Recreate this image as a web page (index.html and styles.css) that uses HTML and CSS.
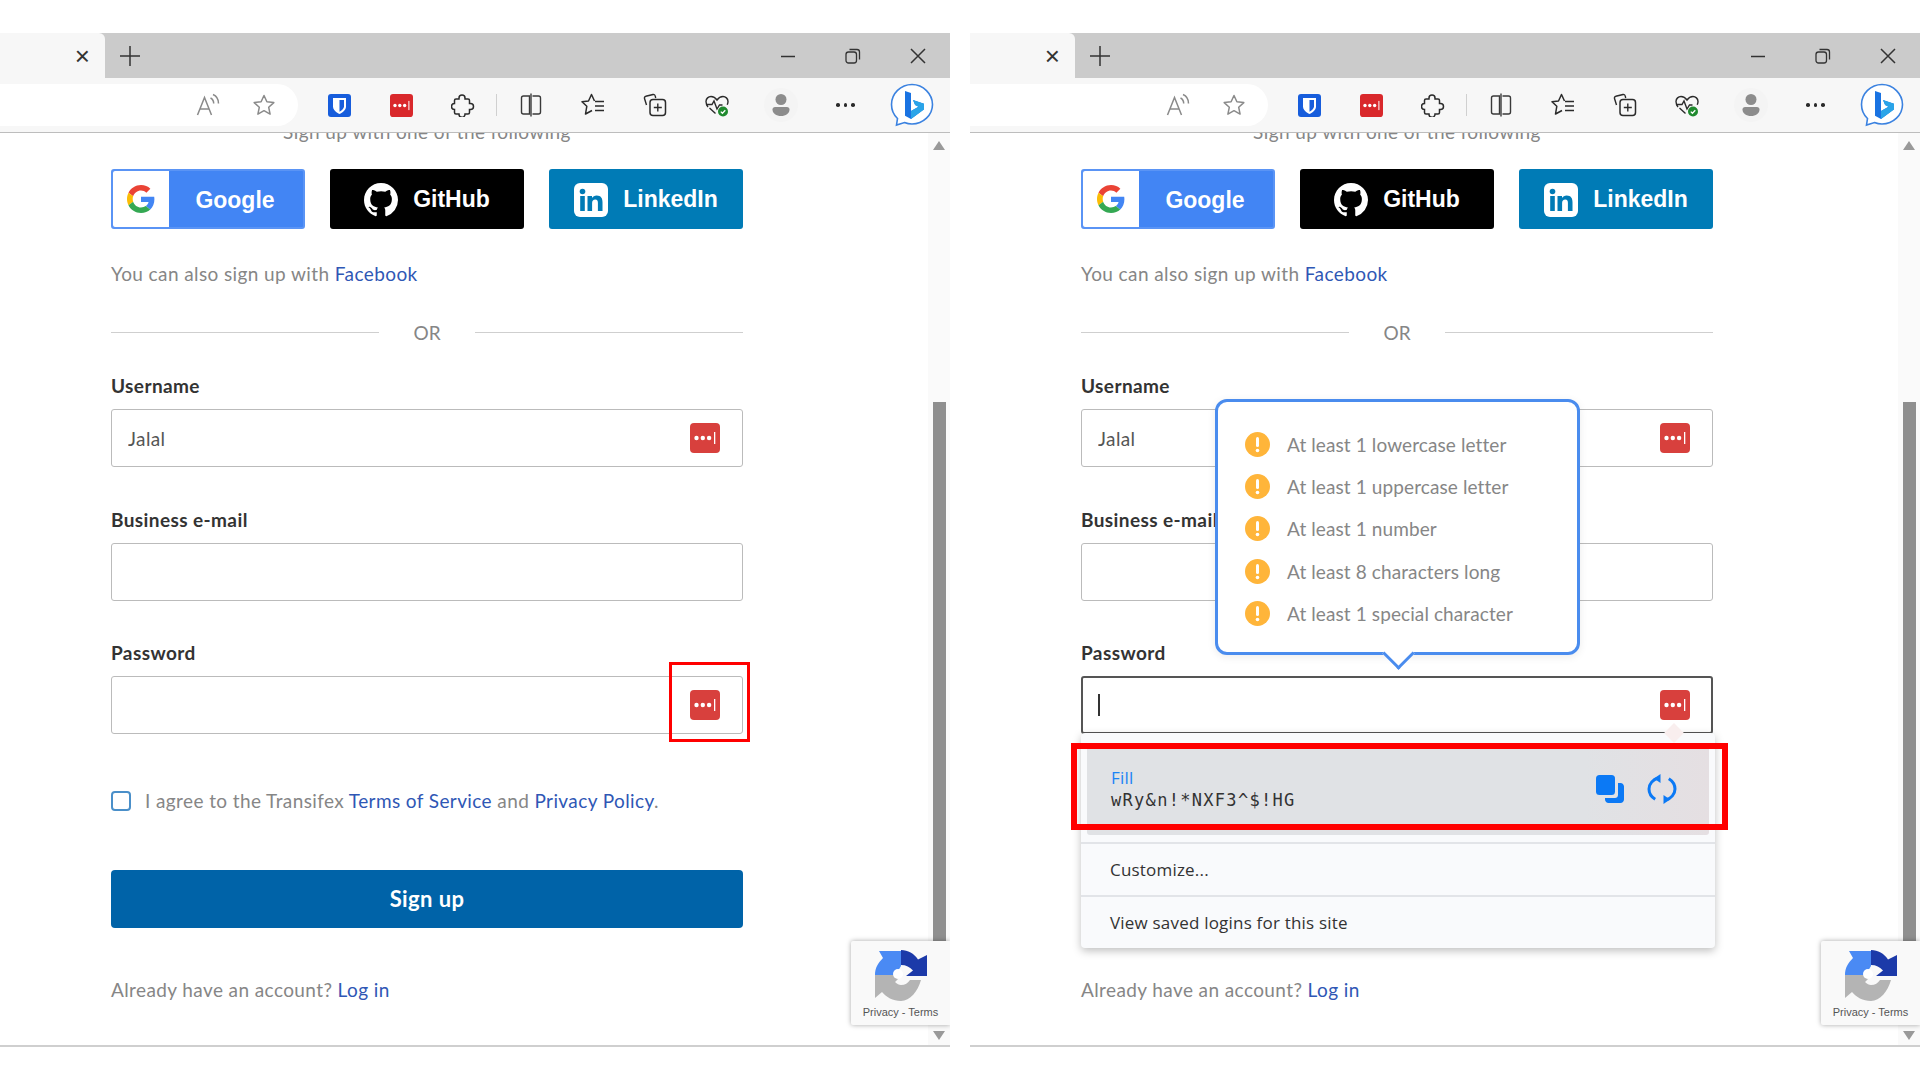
FILE: index.html
```html
<!DOCTYPE html>
<html lang="en">
<head>
    <meta charset="UTF-8">
    <title>Sign up</title>
    <link rel="stylesheet" href="styles.css">
</head>
<body>
    <!-- Shared icons -->
    <svg class="sprite" xmlns="http://www.w3.org/2000/svg">
        <symbol id="i-read" viewBox="0 0 24 24"><path d="M1.500 22 8.500 4.500 15.500 22M4 16h9" fill="none" stroke="#8a8a8a" stroke-width="1.500"/><path d="M14.500 5c2 1 3.200 3 3.200 5.500M17 1.500c3.500 1.500 5.500 5 5.500 9" fill="none" stroke="#8a8a8a" stroke-width="1.500"/></symbol>
        <symbol id="i-star" viewBox="0 0 24 24"><path d="M12 2.500l2.900 6.300 6.900.8-5.100 4.700 1.400 6.800-6.100-3.400-6.100 3.400 1.400-6.800-5.100-4.700 6.900-.8z" fill="none" stroke="#8a8a8a" stroke-width="1.500" stroke-linejoin="round"/></symbol>
        <symbol id="i-bitwarden" viewBox="0 0 23 23"><rect width="23" height="23" rx="3" fill="#175ddc"/><path d="M5 4h13v8.500c0 3.500-3.500 6-6.500 7.500C8.500 18.500 5 16 5 12.500z" fill="#fff"/><path d="M11.500 6H16v6.500c0 2.200-2.500 4-4.500 5.200z" fill="#175ddc"/></symbol>
        <symbol id="i-lastpass" viewBox="0 0 30 30"><rect width="30" height="30" rx="4" fill="currentColor"/><circle cx="6.500" cy="15" r="2.200" fill="#fff"/><circle cx="12.800" cy="15" r="2.200" fill="#fff"/><circle cx="19.100" cy="15" r="2.200" fill="#fff"/><rect x="24" y="9" width="1.300" height="12" fill="#fff"/></symbol>
        <symbol id="i-puzzle" viewBox="0 0 24 24"><path d="M8 6V5a3 3 0 0 1 6 0v1h3a1.500 1.500 0 0 1 1.500 1.500v3h1a3 3 0 0 1 0 6h-1v3A1.500 1.500 0 0 1 17 21h-3v.3a3 3 0 0 1-6 0V21H5a1.500 1.500 0 0 1-1.500-1.500v-3a3 3 0 0 1 0-6v-3A1.500 1.500 0 0 1 5 6z" fill="none" stroke="#2b2b2b" stroke-width="1.500"/></symbol>
        <symbol id="i-split" viewBox="0 0 24 24"><path d="M10.500 3H4.500c-1.100 0-2 .9-2 2v14c0 1.100.9 2 2 2h6zM13.500 3h6c1.100 0 2 .9 2 2v14c0 1.100-.9 2-2 2h-6" fill="none" stroke="#3a3a3a" stroke-width="1.400"/><path d="M12 .5v23" stroke="#3a3a3a" stroke-width="1.400"/></symbol>
        <symbol id="i-favs" viewBox="0 0 24 24"><path d="M13.500 8 10.500 1.500 7.500 8 1 8.800l4.800 4.500L4.500 21l6.500-3.500" fill="none" stroke="#2b2b2b" stroke-width="1.500" stroke-linejoin="round"/><path d="M14 8.500h9M14 13h9M14 17.500h9" stroke="#2b2b2b" stroke-width="1.300"/></symbol>
        <symbol id="i-collect" viewBox="0 0 24 24"><path d="M3.500 12 1.500 5.500c-.3-1 .3-2 1.300-2.200L10 1.500c1-.2 2 .4 2.200 1.400l.5 2.100" fill="none" stroke="#2b2b2b" stroke-width="1.400"/><rect x="7" y="6.500" width="15.500" height="16" rx="3" fill="none" stroke="#2b2b2b" stroke-width="1.500"/><path d="M14.800 10.500v8M10.800 14.500h8" stroke="#2b2b2b" stroke-width="1.400"/></symbol>
        <symbol id="i-health" viewBox="0 0 24 24"><path d="M3 14C1.500 12 1 10.500 1 8.500 1 5.500 3.500 3.500 6 3.500c2.500 0 4.500 1.300 6 3.500 1.500-2.200 3.500-3.500 6-3.500 2.500 0 5 2 5 5 0 1.300-.3 2.300-.8 3.300" fill="none" stroke="#2b2b2b" stroke-width="1.400"/><path d="M1 11.500h6l2-3.500 3 8 2.500-4h3M4.500 15l6 5.500" fill="none" stroke="#2b2b2b" stroke-width="1.400"/><circle cx="18" cy="18.500" r="5" fill="#1f8a2e"/><path d="M15.800 18.600l1.600 1.600 2.900-3" fill="none" stroke="#fff" stroke-width="1.300"/></symbol>
        <symbol id="i-profile" viewBox="0 0 34 34"><circle cx="17" cy="17" r="17" fill="#f4f4f4"/><circle cx="17" cy="11.500" r="5.500" fill="#8c8c8c"/><path d="M8.500 21.500c0-1.500 1-2.500 2.500-2.500h12c1.500 0 2.500 1 2.500 2.500 0 4-3.800 6.500-8.500 6.500s-8.500-2.500-8.500-6.500z" fill="#8c8c8c"/></symbol>
        <symbol id="i-bing" viewBox="0 0 44 44">
            <path d="M22 1.500C10.700 1.500 1.500 10.500 1.500 21.500c0 5.500 2.300 10.500 6 14l-1 6.500 8-2.500c2.400 1 5 1.500 7.500 1.500 11.300 0 20.500-9 20.500-19.500S33.300 1.500 22 1.500z" fill="#fff" stroke="#3b82e0" stroke-width="1.600"/>
            <path d="M15 8l6 2v18l7.500-4.300-3.400-1.600-2.100-5.200 11 3.800v5.600L21 36l-6-3.300z" fill="#1a73e2"/>
            <path d="M21 28l7.500-4.300-3.400-1.600L23 17l11 3.800v5.600L21 36z" fill="#2aa4e8"/>
        </symbol>
        <symbol id="i-google" viewBox="0 0 48 48">
            <path fill="#ea4335" d="M24 9.500c3.540 0 6.710 1.220 9.210 3.600l6.850-6.850C35.900 2.380 30.470 0 24 0 14.620 0 6.510 5.380 2.560 13.220l7.980 6.190C12.430 13.720 17.740 9.500 24 9.500z"/>
            <path fill="#4285f4" d="M46.980 24.550c0-1.570-.15-3.090-.38-4.550H24v9.020h12.940c-.58 2.960-2.260 5.480-4.780 7.180l7.730 6c4.510-4.180 7.090-10.360 7.090-17.650z"/>
            <path fill="#fbbc05" d="M10.530 28.590c-.48-1.450-.76-2.990-.76-4.590s.27-3.140.76-4.590l-7.980-6.190C.92 16.460 0 20.120 0 24c0 3.880.92 7.540 2.560 10.780l7.970-6.190z"/>
            <path fill="#34a853" d="M24 48c6.480 0 11.930-2.130 15.890-5.810l-7.730-6c-2.150 1.450-4.920 2.300-8.160 2.300-6.260 0-11.570-4.220-13.470-9.910l-7.980 6.190C6.510 42.620 14.620 48 24 48z"/>
        </symbol>
        <symbol id="i-github" viewBox="0 0 16 16"><path fill="#fff" d="M8 0C3.580 0 0 3.580 0 8c0 3.540 2.290 6.530 5.470 7.590.4.070.55-.17.55-.38 0-.19-.01-.82-.01-1.490-2.010.37-2.530-.49-2.690-.94-.09-.23-.48-.94-.82-1.130-.28-.15-.68-.52-.01-.53.630-.01 1.080.58 1.230.82.720 1.210 1.870.87 2.330.66.070-.52.280-.87.510-1.070-1.780-.2-3.640-.89-3.640-3.950 0-.87.310-1.590.820-2.150-.08-.2-.36-1.020.08-2.120 0 0 .67-.21 2.200.82.640-.18 1.320-.27 2-.27.680 0 1.360.09 2 .27 1.530-1.040 2.200-.82 2.200-.82.440 1.100.160 1.920.080 2.120.510.560.820 1.270.820 2.150 0 3.070-1.870 3.750-3.650 3.950.290.250.540.730.540 1.480 0 1.070-.01 1.930-.01 2.200 0 .210.150.460.550.380A8.013 8.013 0 0 0 16 8c0-4.420-3.580-8-8-8z"/></symbol>
        <symbol id="i-linkedin" viewBox="0 0 34 34"><rect width="34" height="34" rx="6" fill="#fff"/><circle cx="8.500" cy="8.500" r="2.800" fill="#007bb6"/><rect x="6.200" y="13" width="4.600" height="15" fill="#007bb6"/><path d="M13.500 13H18v2.100c.9-1.500 2.600-2.500 4.700-2.500 4.300 0 5.800 2.800 5.800 6.700V28h-4.600v-7.900c0-2-.6-3.500-2.600-3.500-2.100 0-3.200 1.500-3.200 3.500V28h-4.600z" fill="#007bb6"/></symbol>
        <symbol id="i-captcha" viewBox="0 0 52 52">
            <path fill="#b4b4b4" d="M0 25h27l-7 7c2 2 4 3 6 3 4 0 7-2 9-5h11c-3 11-11 21-20 21-8 0-15-4-19-9l-7 6z"/>
            <path fill="#4a8af4" d="M0 25c0-7 3-12 8-17L4 1h22v15l-3 5-3 4H0z"/>
            <path fill="#1c3aa9" d="M26 0c7 0 13 3.500 17 9.500L52 5v21H31l7-5.500c-3-3.500-7-5.500-12-5.500z"/>
            <circle cx="23" cy="24" r="5" fill="#fff"/>
        </symbol>
        <symbol id="i-warn" viewBox="0 0 25 25"><circle cx="12.500" cy="12.500" r="12.500" fill="#ffb53a"/><rect x="11" y="5" width="3" height="10" rx="1.500" fill="#fff"/><circle cx="12.500" cy="18.500" r="1.800" fill="#fff"/></symbol>
    </svg>

    <div class="screens">
        <!-- Left window: field with the LastPass icon -->
        <div class="browser">
            <div class="tabbar">
                <div class="tab"><span class="tab-close">&times;</span></div>
                <svg class="new-tab" width="20" height="20" viewBox="0 0 20 20"><path d="M10 0v20M0 10h20" stroke="#333" stroke-width="1.500"/></svg>
                <div class="win-controls">
                    <div class="win-btn"><svg width="16" height="16" viewBox="0 0 16 16"><path d="M1 8.500h14" stroke="#333" stroke-width="1.500"/></svg></div>
                    <div class="win-btn"><svg width="16" height="16" viewBox="0 0 16 16"><rect x="1" y="4" width="10.500" height="11" rx="2.500" fill="none" stroke="#333" stroke-width="1.300"/><path d="M4.500 1.500H12c1.500 0 2.500 1 2.500 2.500v7.500" fill="none" stroke="#333" stroke-width="1.300"/></svg></div>
                    <div class="win-btn"><svg width="16" height="16" viewBox="0 0 16 16"><path d="M1 1l14 14M15 1L1 15" stroke="#333" stroke-width="1.500"/></svg></div>
                </div>
            </div>
            <div class="toolbar">
                <div class="address">
                    <div class="cell-address"><svg class="ico-24"><use href="#i-read"/></svg></div>
                    <div class="cell-address"><svg class="ico-24"><use href="#i-star"/></svg></div>
                </div>
                <div class="tool"><svg class="ico-23"><use href="#i-bitwarden"/></svg></div>
                <div class="tool"><svg class="ico-23 lp-tool"><use href="#i-lastpass"/></svg></div>
                <div class="tool"><svg class="ico-24"><use href="#i-puzzle"/></svg></div>
                <div class="tool-sep"></div>
                <div class="tool"><svg class="ico-24"><use href="#i-split"/></svg></div>
                <div class="tool"><svg class="ico-24"><use href="#i-favs"/></svg></div>
                <div class="tool"><svg class="ico-24"><use href="#i-collect"/></svg></div>
                <div class="tool"><svg class="ico-24"><use href="#i-health"/></svg></div>
                <div class="tool tool-wide"><svg class="ico-34"><use href="#i-profile"/></svg></div>
                <div class="tool tool-wide"><div class="dots"><i></i><i></i><i></i></div></div>
                <div class="tool tool-bing"><svg class="ico-44"><use href="#i-bing"/></svg></div>
            </div>
            <div class="page">
                <div class="page-body">
                    <div class="form">
                        <p class="signup-with">Sign up with one of the following</p>
                        <div class="social">
                            <a class="social-btn btn-google"><span class="g-box"><svg class="ico-26"><use href="#i-google"/></svg></span><span class="g-label">Google</span></a>
                            <a class="social-btn btn-github"><svg class="ico-34"><use href="#i-github"/></svg>GitHub</a>
                            <a class="social-btn btn-linkedin"><svg class="ico-34"><use href="#i-linkedin"/></svg>LinkedIn</a>
                        </div>
                        <p class="text also">You can also sign up with <a class="link">Facebook</a></p>
                        <div class="or"><span>OR</span></div>
                        <div class="field field-first">
                            <label class="field-label">Username</label>
                            <div class="input-wrap"><input class="input" type="text" value="Jalal"><svg class="lp-icon"><use href="#i-lastpass"/></svg></div>
                        </div>
                        <div class="field">
                            <label class="field-label">Business e-mail</label>
                            <div class="input-wrap"><input class="input" type="text"></div>
                        </div>
                        <div class="field field-last">
                            <label class="field-label">Password</label>
                            <div class="input-wrap"><input class="input" type="text"><svg class="lp-icon"><use href="#i-lastpass"/></svg></div>
                        </div>
                        <div class="agree"><span class="checkbox"></span><p class="text">I agree to the Transifex <a class="link">Terms of Service</a> and <a class="link">Privacy Policy</a>.</p></div>
                        <button class="submit">Sign up</button>
                        <p class="text already">Already have an account? <a class="link">Log in</a></p>
                    </div>
                </div>
                <div class="scrollbar"><div class="arrow-up"></div><div class="thumb"></div><div class="arrow-down"></div></div>
                <div class="captcha"><svg class="ico-52"><use href="#i-captcha"/></svg><span>Privacy - Terms</span></div>
                <div class="mark mark-icon"></div>
            </div>
        </div>

        <!-- Right window: password generator open -->
        <div class="browser">
            <div class="tabbar">
                <div class="tab"><span class="tab-close">&times;</span></div>
                <svg class="new-tab" width="20" height="20" viewBox="0 0 20 20"><path d="M10 0v20M0 10h20" stroke="#333" stroke-width="1.500"/></svg>
                <div class="win-controls">
                    <div class="win-btn"><svg width="16" height="16" viewBox="0 0 16 16"><path d="M1 8.500h14" stroke="#333" stroke-width="1.500"/></svg></div>
                    <div class="win-btn"><svg width="16" height="16" viewBox="0 0 16 16"><rect x="1" y="4" width="10.500" height="11" rx="2.500" fill="none" stroke="#333" stroke-width="1.300"/><path d="M4.500 1.500H12c1.500 0 2.500 1 2.500 2.500v7.500" fill="none" stroke="#333" stroke-width="1.300"/></svg></div>
                    <div class="win-btn"><svg width="16" height="16" viewBox="0 0 16 16"><path d="M1 1l14 14M15 1L1 15" stroke="#333" stroke-width="1.500"/></svg></div>
                </div>
            </div>
            <div class="toolbar">
                <div class="address">
                    <div class="cell-address"><svg class="ico-24"><use href="#i-read"/></svg></div>
                    <div class="cell-address"><svg class="ico-24"><use href="#i-star"/></svg></div>
                </div>
                <div class="tool"><svg class="ico-23"><use href="#i-bitwarden"/></svg></div>
                <div class="tool"><svg class="ico-23 lp-tool"><use href="#i-lastpass"/></svg></div>
                <div class="tool"><svg class="ico-24"><use href="#i-puzzle"/></svg></div>
                <div class="tool-sep"></div>
                <div class="tool"><svg class="ico-24"><use href="#i-split"/></svg></div>
                <div class="tool"><svg class="ico-24"><use href="#i-favs"/></svg></div>
                <div class="tool"><svg class="ico-24"><use href="#i-collect"/></svg></div>
                <div class="tool"><svg class="ico-24"><use href="#i-health"/></svg></div>
                <div class="tool tool-wide"><svg class="ico-34"><use href="#i-profile"/></svg></div>
                <div class="tool tool-wide"><div class="dots"><i></i><i></i><i></i></div></div>
                <div class="tool tool-bing"><svg class="ico-44"><use href="#i-bing"/></svg></div>
            </div>
            <div class="page">
                <div class="page-body">
                    <div class="form">
                        <p class="signup-with">Sign up with one of the following</p>
                        <div class="social">
                            <a class="social-btn btn-google"><span class="g-box"><svg class="ico-26"><use href="#i-google"/></svg></span><span class="g-label">Google</span></a>
                            <a class="social-btn btn-github"><svg class="ico-34"><use href="#i-github"/></svg>GitHub</a>
                            <a class="social-btn btn-linkedin"><svg class="ico-34"><use href="#i-linkedin"/></svg>LinkedIn</a>
                        </div>
                        <p class="text also">You can also sign up with <a class="link">Facebook</a></p>
                        <div class="or"><span>OR</span></div>
                        <div class="field field-first">
                            <label class="field-label">Username</label>
                            <div class="input-wrap"><input class="input" type="text" value="Jalal"><svg class="lp-icon"><use href="#i-lastpass"/></svg></div>
                        </div>
                        <div class="field">
                            <label class="field-label">Business e-mail</label>
                            <div class="input-wrap"><input class="input" type="text"></div>
                        </div>
                        <div class="field field-last">
                            <label class="field-label">Password</label>
                            <div class="input-wrap"><input class="input input-focus" type="text"><span class="caret"></span><svg class="lp-icon"><use href="#i-lastpass"/></svg></div>
                        </div>
                        <div class="agree"><span class="checkbox"></span><p class="text">I agree to the Transifex <a class="link">Terms of Service</a> and <a class="link">Privacy Policy</a>.</p></div>
                        <button class="submit">Sign up</button>
                        <p class="text already">Already have an account? <a class="link">Log in</a></p>
                    </div>
                </div>
                <div class="scrollbar"><div class="arrow-up"></div><div class="thumb"></div><div class="arrow-down"></div></div>
                <div class="captcha"><svg class="ico-52"><use href="#i-captcha"/></svg><span>Privacy - Terms</span></div>

                <div class="popover">
                    <div class="rule"><svg class="ico-25"><use href="#i-warn"/></svg>At least 1 lowercase letter</div>
                    <div class="rule"><svg class="ico-25"><use href="#i-warn"/></svg>At least 1 uppercase letter</div>
                    <div class="rule"><svg class="ico-25"><use href="#i-warn"/></svg>At least 1 number</div>
                    <div class="rule"><svg class="ico-25"><use href="#i-warn"/></svg>At least 8 characters long</div>
                    <div class="rule"><svg class="ico-25"><use href="#i-warn"/></svg>At least 1 special character</div>
                </div>

                <div class="lp-menu">
                    <div class="fill-row">
                        <div class="fill-text">
                            <div class="fill-title">Fill</div>
                            <div class="fill-pass">wRy&amp;n!*NXF3^$!HG</div>
                        </div>
                        <svg class="fill-copy" viewBox="0 0 28 28"><rect x="0" y="0" width="19" height="20" rx="3.500" fill="#0b79f5"/><path d="M22 8h2.500C26.400 8 28 9.600 28 11.500V24.500c0 1.900-1.600 3.500-3.500 3.500h-12C10.600 28 9 26.400 9 24.500V23h10c1.700 0 3-1.300 3-3z" fill="#0b79f5"/></svg>
                        <svg class="fill-refresh" viewBox="0 0 30 30"><path d="M11 4C6 5.500 2 9.800 2 15c0 4.300 2.500 8 6.200 10.300M19 26c5-1.500 9-5.800 9-11 0-4.300-2.500-8-6.200-10.300" fill="none" stroke="#0b79f5" stroke-width="3"/><path d="M13.500 0v9L7 4.500zM16.500 30v-9l6.500 4.500z" fill="#0b79f5"/></svg>
                    </div>
                    <div class="menu-row menu-first">Customize...</div>
                    <div class="menu-row">View saved logins for this site</div>
                </div>
                <div class="mark mark-fill"></div>
            </div>
        </div>
    </div>
</body>
</html>
```

FILE: styles.css
```css
* {
    box-sizing: border-box;
}
body {
    margin: 0;
    background: #fff;
    font-family: "Lato", "Liberation Sans", sans-serif;
    overflow: hidden;
}
p {
    margin: 0;
}
.sprite {
    display: block;
    width: 0;
    height: 0;
}
.screens {
    display: flex;
    gap: 20px;
    padding-top: 33px;
}
.browser {
    width: 950px;
    height: 1014px;
    display: flex;
    flex-direction: column;
}

/* icon sizes */
.ico-23 { width: 23px; height: 23px; }
.ico-24 { width: 24px; height: 24px; }
.ico-25 { width: 25px; height: 25px; flex: none; }
.ico-26 { width: 28px; height: 28px; }
.ico-34 { width: 34px; height: 34px; }
.ico-44 { width: 44px; height: 44px; }
.ico-52 { width: 52px; height: 52px; }

/* tab strip */
.tabbar {
    height: 45px;
    background: #cbcbcb;
    display: flex;
    align-items: center;
    flex: none;
}
.tab {
    width: 105px;
    height: 45px;
    background: #f7f7f7;
    border-top-right-radius: 6px;
    display: flex;
    align-items: center;
    justify-content: flex-end;
    padding-right: 15px;
}
.tab-close {
    font-family: "Liberation Sans", sans-serif;
    font-size: 26px;
    color: #333;
    line-height: 1;
}
.new-tab {
    margin-left: 15px;
}
.win-controls {
    display: flex;
    margin-left: auto;
}
.win-btn {
    width: 65px;
    display: flex;
    justify-content: center;
}

/* toolbar */
.toolbar {
    height: 55px;
    background: #f7f7f7;
    border-bottom: 1px solid #bdbdbd;
    display: flex;
    align-items: center;
    flex: none;
}
.address {
    width: 298px;
    height: 42px;
    margin-right: 10px;
    background: #fff;
    border-radius: 0 21px 21px 0;
    display: flex;
    justify-content: flex-end;
    padding-right: 6px;
}
.cell-address {
    width: 56px;
    display: flex;
    align-items: center;
    justify-content: center;
}
.tool {
    width: 62px;
    display: flex;
    align-items: center;
    justify-content: center;
}
.tool-wide {
    width: 65px;
}
.tool-bing {
    width: 68px;
}
.tool-sep {
    width: 1px;
    height: 22px;
    background: #d0d0d0;
    margin: 0 3px 0 2px;
}
.lp-tool {
    color: #d9282b;
}
.dots {
    display: flex;
    gap: 4px;
}
.dots i {
    width: 3.500px;
    height: 3.500px;
    border-radius: 50%;
    background: #2b2b2b;
}

/* page content */
.page {
    position: relative;
    flex: 1;
    display: flex;
    overflow: hidden;
    background: #fff;
    border-bottom: 2px solid #cfcfcf;
}
.page-body {
    flex: 1;
    padding-left: 111px;
}
.form {
    width: 632px;
}
.text {
    font-size: 19px;
    letter-spacing: 0.4px;
    line-height: 22px;
    color: #868686;
}
.link {
    color: #2f57b5;
}
.signup-with {
    margin-top: -12px;
    font-size: 19px;
    letter-spacing: 0.4px;
    line-height: 22px;
    color: #868686;
    text-align: center;
}
.social {
    display: flex;
    gap: 25px;
    margin-top: 26px;
}
.social-btn {
    width: 194px;
    height: 60px;
    padding-top: 1px;
    border-radius: 3px;
    display: flex;
    align-items: center;
    justify-content: center;
    gap: 15px;
    color: #fff;
    font-family: "Liberation Sans", sans-serif;
    font-size: 23px;
    font-weight: 700;
}
.btn-google {
    background: #4285f4;
    border: 2px solid #5a94f5;
    padding: 0 2px 0 0;
    gap: 0;
    justify-content: flex-start;
}
.g-box {
    width: 56px;
    height: 56px;
    background: #fff;
    border-radius: 2px 0 0 2px;
    display: flex;
    align-items: center;
    justify-content: center;
}
.g-label {
    flex: 1;
    padding-top: 2px;
    text-align: center;
}
.btn-github {
    background: #000;
}
.btn-linkedin {
    background: #007bb6;
}
.also {
    margin-top: 34px;
}
.or {
    margin-top: 36px;
    height: 22px;
    display: flex;
    align-items: center;
    gap: 34px;
    font-size: 19px;
    color: #868686;
}
.or::before,
.or::after {
    content: "";
    flex: 1;
    height: 1px;
    background: #cfcfcf;
}
.field {
    margin-top: 42px;
}
.field-first {
    margin-top: 32px;
}
.field-last {
    margin-top: 41px;
}
.field-label {
    display: block;
    font-size: 19px;
    font-weight: 700;
    letter-spacing: 0.4px;
    line-height: 22px;
    color: #333;
}
.input-wrap {
    position: relative;
    margin-top: 12px;
}
.input {
    display: block;
    width: 632px;
    height: 58px;
    padding: 0 16px;
    border: 1px solid #bbb;
    border-radius: 3px;
    background: #fff;
    font-family: inherit;
    font-size: 19px;
    letter-spacing: 0.4px;
    color: #555;
    outline: none;
}
.input-focus {
    border: 2px solid #555;
}
.caret {
    position: absolute;
    left: 17px;
    top: 18px;
    width: 2px;
    height: 22px;
    background: #333;
}
.lp-icon {
    position: absolute;
    right: 23px;
    top: 14px;
    width: 30px;
    height: 30px;
    color: #d8403d;
}
.agree {
    display: flex;
    align-items: center;
    gap: 14px;
    margin-top: 56px;
    height: 22px;
}
.checkbox {
    width: 20px;
    height: 20px;
    border: 2px solid #4a8fc9;
    border-radius: 4px;
}
.submit {
    display: block;
    width: 632px;
    height: 58px;
    margin-top: 58px;
    padding-bottom: 2px;
    border: none;
    border-radius: 4px;
    background: #0063a8;
    color: #fff;
    font-family: inherit;
    font-size: 22px;
    font-weight: 700;
    letter-spacing: 0.4px;
}
.already {
    margin-top: 51px;
}

/* scrollbar */
.scrollbar {
    width: 22px;
    background: #fafafa;
    display: flex;
    flex-direction: column;
    align-items: center;
}
.arrow-up {
    margin-top: 8px;
    border-left: 6px solid transparent;
    border-right: 6px solid transparent;
    border-bottom: 9px solid #999;
}
.thumb {
    width: 13px;
    height: 545px;
    margin-top: 252px;
    background: #8f8f8f;
}
.arrow-down {
    margin-top: auto;
    margin-bottom: 5px;
    border-left: 6px solid transparent;
    border-right: 6px solid transparent;
    border-top: 9px solid #999;
}
.captcha {
    position: absolute;
    right: 0;
    top: 808px;
    width: 99px;
    height: 84px;
    background: #f9f9f9;
    border-radius: 2px 0 0 2px;
    box-shadow: 0 0 5px rgba(0, 0, 0, 0.35);
    display: flex;
    flex-direction: column;
    align-items: center;
    padding-top: 9px;
    font-family: "Liberation Sans", sans-serif;
    font-size: 11px;
    color: #555;
    gap: 4px;
}

/* red call-outs */
.mark {
    position: absolute;
    border: 3px solid #f00;
}
.mark-icon {
    left: 669px;
    top: 529px;
    width: 81px;
    height: 80px;
}
.mark-fill {
    left: 101px;
    top: 610px;
    width: 657px;
    height: 87px;
    border-width: 6px;
}

/* password rules popover */
.popover {
    position: absolute;
    left: 245px;
    top: 266px;
    width: 365px;
    height: 256px;
    padding: 21px 0 0 27px;
    background: #fff;
    border: 3px solid #4a8cee;
    border-radius: 12px;
    box-shadow: 0 2px 8px rgba(0, 0, 0, 0.08);
    display: flex;
    flex-direction: column;
}
.popover::after {
    content: "";
    position: absolute;
    left: 169px;
    bottom: -13px;
    width: 20px;
    height: 20px;
    background: #fff;
    border-right: 3px solid #4a8cee;
    border-bottom: 3px solid #4a8cee;
    transform: rotate(45deg);
}
.rule {
    height: 42.300px;
    display: flex;
    align-items: center;
    gap: 17px;
    font-size: 19px;
    letter-spacing: 0.1px;
    color: #868686;
}

/* LastPass dropdown */
.lp-menu {
    position: absolute;
    left: 111px;
    top: 600px;
    width: 634px;
    height: 215px;
    padding-top: 10px;
    background: #f9fafc;
    border-radius: 4px;
    box-shadow: 0 3px 8px rgba(0, 0, 0, 0.25);
    font-family: "Open Sans", sans-serif;
    font-size: 17px;
    letter-spacing: 0.2px;
    color: #333;
}
.lp-menu::before {
    content: "";
    position: absolute;
    left: 586px;
    top: -7px;
    width: 14px;
    height: 14px;
    background: #f9eeee;
    transform: rotate(45deg);
}
.fill-row {
    position: relative;
    height: 92px;
    margin: 0 6px 0 6px;
    padding: 0 32px 0 24px;
    background: linear-gradient(90deg, #e0e2e5 80%, #e5dfe2);
    border-radius: 3px;
    display: flex;
    align-items: center;
    gap: 23px;
}
.fill-text {
    flex: 1;
}
.fill-title {
    font-size: 17px;
    line-height: 22px;
    color: #1b84f5;
}
.fill-pass {
    font-family: "DejaVu Sans Mono", monospace;
    font-size: 17px;
    line-height: 22px;
    letter-spacing: 1.300px;
}
.fill-copy {
    width: 28px;
    height: 28px;
}
.fill-refresh {
    width: 30px;
    height: 30px;
}
.menu-row {
    height: 53px;
    padding-left: 29px;
    display: flex;
    align-items: center;
    border-top: 2px solid #e2e4e8;
}
.menu-first {
    margin-top: 7px;
}
```
